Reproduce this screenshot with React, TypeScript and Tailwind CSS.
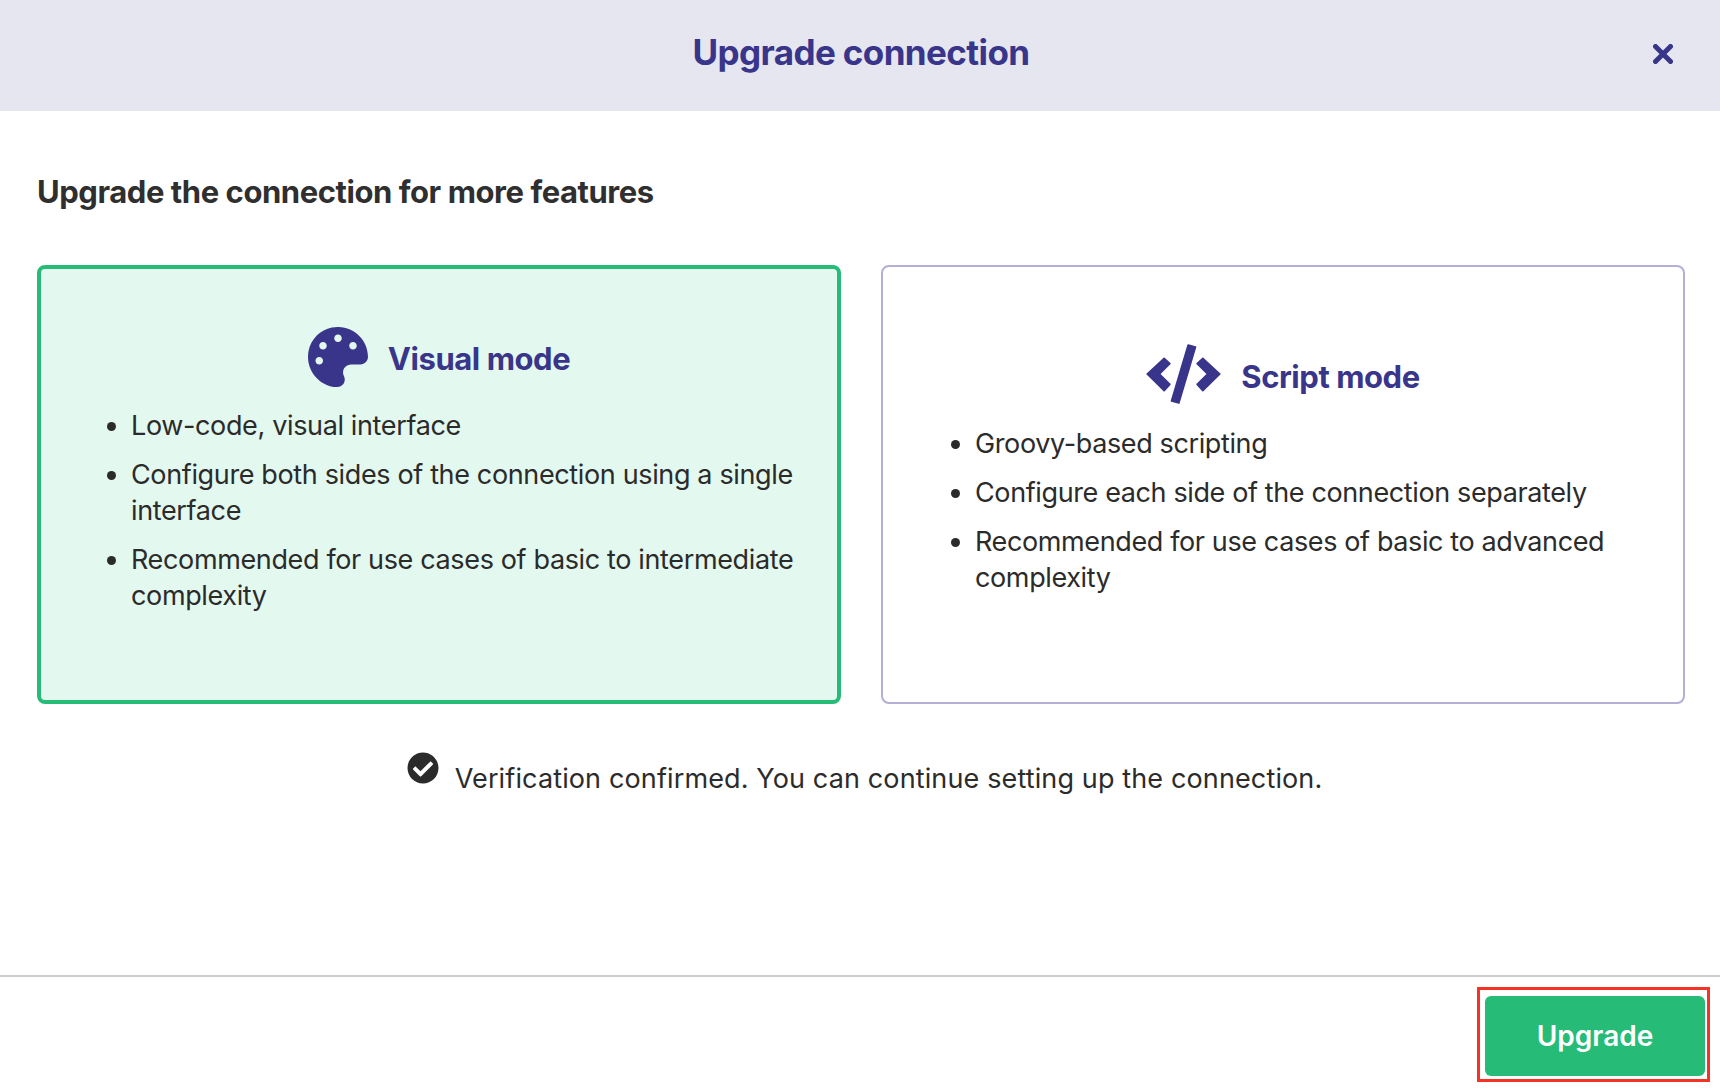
import { FaCheckCircle, FaPalette } from "react-icons/fa"

const cards = [
  {
    title: "Visual mode",
    active: true,
    items: [
      "Low-code, visual interface",
      "Configure both sides of the connection using a single interface",
      "Recommended for use cases of basic to intermediate complexity",
    ],
  },
  {
    title: "Script mode",
    active: false,
    items: [
      "Groovy-based scripting",
      "Configure each side of the connection separately",
      "Recommended for use cases of basic to advanced complexity",
    ],
  },
]

function CodeIcon() {
  return (
    <svg viewBox="48 42 224 180" className="h-[60px] w-[75px] shrink-0" fill="#38358a" stroke="#38358a" strokeWidth="5" strokeLinejoin="round">
      <polygon points="51,132 102,85 119,101 88,132 119,163 102,182" />
      <polygon points="269,132 218,85 201,101 232,132 201,163 218,182" />
      <polygon points="174,45 196,51 146,219 124,213" />
    </svg>
  )
}

function ModeCard({ title, active, items }: { title: string; active: boolean; items: string[] }) {
  return (
    <div
      className={
        active
          ? "flex h-[439px] w-[804px] shrink-0 flex-col items-center justify-center rounded-lg border-4 border-[#27bb78] bg-[#e3f8ef] pb-[29px]"
          : "flex h-[439px] w-[804px] shrink-0 flex-col items-center justify-center rounded-lg border-2 border-[#b3afd6] bg-white pb-[30px]"
      }
    >
      <div className="flex h-[61px] items-center gap-[20px] self-center">
        {active ? <FaPalette className="h-[60px] w-[60px] shrink-0 text-[#38358a]" /> : <CodeIcon />}
        <span className="pt-[6px] text-[31px] font-bold tracking-[-0.45px] text-[#38358a]">{title}</span>
      </div>
      <ul
        className={
          active
            ? "mt-[8px] w-full list-disc pl-[90px] pr-[30px] text-[27px] leading-[36px] tracking-[-0.36px] text-[#2b2b2b]"
            : "mt-[8px] w-full list-disc pl-[92px] pr-[30px] text-[27px] leading-[36px] tracking-[-0.38px] text-[#2b2b2b]"
        }
      >
        {items.map((item) => (
          <li key={item} className="mt-[13px]">
            {item}
          </li>
        ))}
      </ul>
    </div>
  )
}

export default function App() {
  return (
    <div className="flex h-[1090px] w-[1720px] flex-col bg-white font-['Inter',sans-serif]">
      <header className="relative flex h-[111px] shrink-0 items-center justify-center bg-[#e5e6ef] pb-[6px] pl-[2px]">
        <h1 className="text-[35px] font-bold tracking-[-0.6px] text-[#38358a]">Upgrade connection</h1>
        <svg viewBox="0 0 20 20" className="absolute right-[47px] top-[44px] h-[20px] w-[20px]" stroke="#38358a" strokeWidth="5" strokeLinecap="round">
          <path d="M2.5 2.5 17.5 17.5M17.5 2.5 2.5 17.5" />
        </svg>
      </header>

      <main className="flex-1 pl-[37px] pr-[35px]">
        <h2 className="mt-[60px] text-[31px] font-bold leading-[42px] tracking-[-0.44px] text-[#2f2f2f]">
          Upgrade the connection for more features
        </h2>
        <div className="mt-[52px] flex gap-[40px]">
          {cards.map((card) => (
            <ModeCard key={card.title} {...card} />
          ))}
        </div>
        <div className="mt-[48px] flex justify-center gap-[16px] pl-[7px] text-[27px] leading-[36px] tracking-[0.13px] text-[#2b2b2b]">
          <FaCheckCircle className="h-[32px] w-[32px] shrink-0 text-[#2b2b2b]" />
          <p className="pt-[9px]">Verification confirmed. You can continue setting up the connection.</p>
        </div>
      </main>

      <footer className="flex h-[115px] shrink-0 justify-end border-t-2 border-[#cccccc] pr-[15px] pt-[19px]">
        <div className="relative h-[80px] w-[220px]">
          <button className="h-full w-full rounded-md bg-[#27bb78] text-[28px] font-semibold text-white">Upgrade</button>
          <div className="absolute -bottom-[6px] -left-[8px] -right-[5px] -top-[9px] border-[3px] border-[#f53324]" />
        </div>
      </footer>
    </div>
  )
}
